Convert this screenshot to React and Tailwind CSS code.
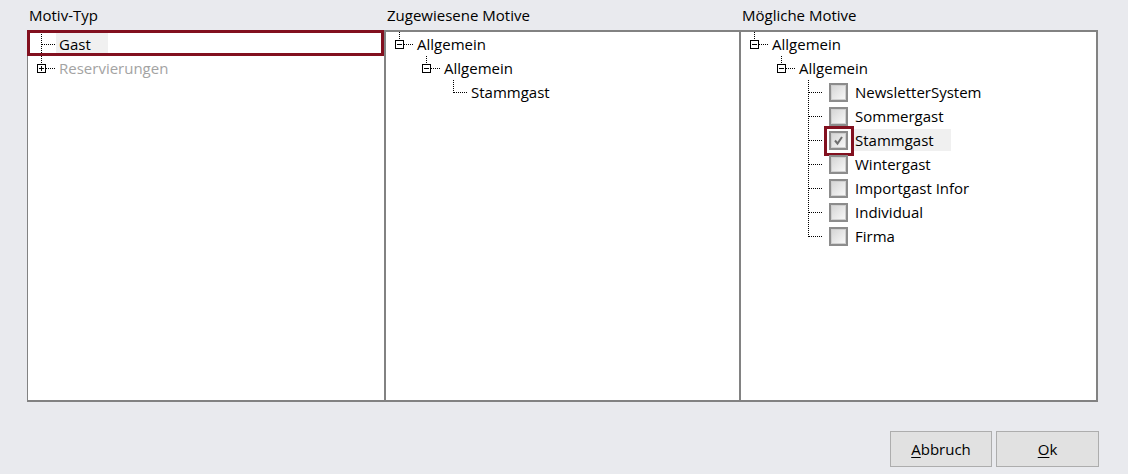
import React from 'react';

const FONT = { fontFamily: '"Open Sans", "Noto Sans", sans-serif' };

// tree-line drawing helpers (1px dotted, crisp)
const VLine = ({ x, y1, y2 }) => (
    <line x1={x + 0.5} y1={y1} x2={x + 0.5} y2={y2} stroke="#000" strokeDasharray="1 1" shapeRendering="crispEdges" />
);
const HLine = ({ x1, x2, y = 12 }) => (
    <line x1={x1} y1={y + 0.5} x2={x2 + 1} y2={y + 0.5} stroke="#000" strokeDasharray="1 1" shapeRendering="crispEdges" />
);
const Expander = ({ cx, plus }) => (
    <g shapeRendering="crispEdges">
        <rect x={cx - 4 + 0.5} y={8.5} width={8} height={8} fill="#fff" stroke="#000" />
        <line x1={cx - 2} y1={12.5} x2={cx + 3} y2={12.5} stroke="#000" />
        {plus && <line x1={cx + 0.5} y1={10} x2={cx + 0.5} y2={15} stroke="#000" />}
    </g>
);

const Row = ({ width, lines, children }) => (
    <div className="flex h-6 items-center">
        <svg width={width} height="24" className="shrink-0">{lines}</svg>
        {children}
    </div>
);

const Label = ({ children, muted, selected }) => (
    <span
        className={`flex h-[22px] items-center pl-[3px] pr-[17px] text-[15px] leading-none ${muted ? 'text-[#a3a3a3]' : 'text-black'} ${selected ? 'bg-[#f0f0f0]' : ''}`}
    >
        {children}
    </span>
);

// level 0 node with minus box
const RootNode = ({ text }) => (
    <Row width={28} lines={<><VLine x={13} y1={0} y2={8} /><Expander cx={13} /><HLine x1={18} x2={27} /></>}>
        <Label>{text}</Label>
    </Row>
);
const GroupNode = ({ text }) => (
    <Row width={55} lines={<><VLine x={40} y1={0} y2={8} /><Expander cx={40} /><HLine x1={45} x2={54} /></>}>
        <Label>{text}</Label>
    </Row>
);

const Checkbox = ({ checked, focused }) => (
    <div className="relative ml-[2px] shrink-0">
        <div className="flex h-[19px] w-[19px] items-center justify-center border-2 border-[#8c8c8c] bg-[#cfcfcf] p-px">
            <div className="relative h-full w-full bg-gradient-to-br from-[#d6d6d6] to-[#f7f7f7]">
                {checked && (
                    <svg viewBox="0 0 13 13" className="absolute inset-0 h-full w-full">
                        <path d="M3 6.5 L5.5 9.5 L10 3" fill="none" stroke="#6e6e6e" strokeWidth="2" />
                    </svg>
                )}
            </div>
        </div>
        {focused && <div className="absolute -left-[5px] -top-[5px] h-[30px] w-[30px] border-[3px] border-[#82101f]" />}
    </div>
);

const CheckNode = ({ text, last, checked }) => (
    <Row width={86} lines={<><VLine x={67} y1={0} y2={last ? 13 : 24} /><HLine x1={68} x2={80} /></>}>
        <Checkbox checked={checked} focused={checked} />
        <span className="ml-[4px]">
            <Label selected={checked}>{text}</Label>
        </span>
    </Row>
);

const Column = ({ title, className, children }) => (
    <div className="flex flex-col">
        <div className="h-[30px] pl-[2px] pt-[5px] text-[15px] leading-5 text-black">{title}</div>
        <div className={`relative h-[372px] border-y-2 border-[#828282] bg-white ${className}`}>{children}</div>
    </div>
);

const App = () => {
    const moegliche = ['NewsletterSystem', 'Sommergast', 'Stammgast', 'Wintergast', 'Importgast Infor', 'Individual', 'Firma'];

    return (
        <div className="flex h-[474px] w-[1128px] flex-col bg-[#e9eaee] pl-[27px]" style={FONT}>
            <div className="flex">
                <Column title="Motiv-Typ" className="w-[358px] border-x">
                    <div className="absolute -left-px -top-[2px] h-[26px] w-[357px] border-[3px] border-[#82101f]" />
                    <Row width={28} lines={<><VLine x={13} y1={0} y2={24} /><HLine x1={14} x2={27} /></>}>
                        <Label selected>Gast</Label>
                    </Row>
                    <Row width={28} lines={<><VLine x={13} y1={0} y2={8} /><Expander cx={13} plus /><HLine x1={18} x2={27} /></>}>
                        <Label muted>Reservierungen</Label>
                    </Row>
                </Column>

                <Column title="Zugewiesene Motive" className="w-[355px] border-x">
                    <RootNode text="Allgemein" />
                    <GroupNode text="Allgemein" />
                    <Row width={82} lines={<><VLine x={67} y1={0} y2={13} /><HLine x1={68} x2={81} /></>}>
                        <Label>Stammgast</Label>
                    </Row>
                </Column>

                <Column title="Mögliche Motive" className="w-[358px] border-l border-r-2">
                    <RootNode text="Allgemein" />
                    <GroupNode text="Allgemein" />
                    {moegliche.map((m, i) => (
                        <CheckNode key={m} text={m} checked={m === 'Stammgast'} last={i === moegliche.length - 1} />
                    ))}
                </Column>
            </div>

            <div className="mt-[29px] flex justify-end gap-1 pr-[29px]">
                <button className="h-9 w-[102px] border border-[#adadad] bg-[#e1e1e1] text-[15px] text-black">
                    <span className="underline underline-offset-2">A</span>bbruch
                </button>
                <button className="h-9 w-[103px] border border-[#adadad] bg-[#e1e1e1] text-[15px] text-black">
                    <span className="underline underline-offset-2">O</span>k
                </button>
            </div>
        </div>
    );
};

export default App;
